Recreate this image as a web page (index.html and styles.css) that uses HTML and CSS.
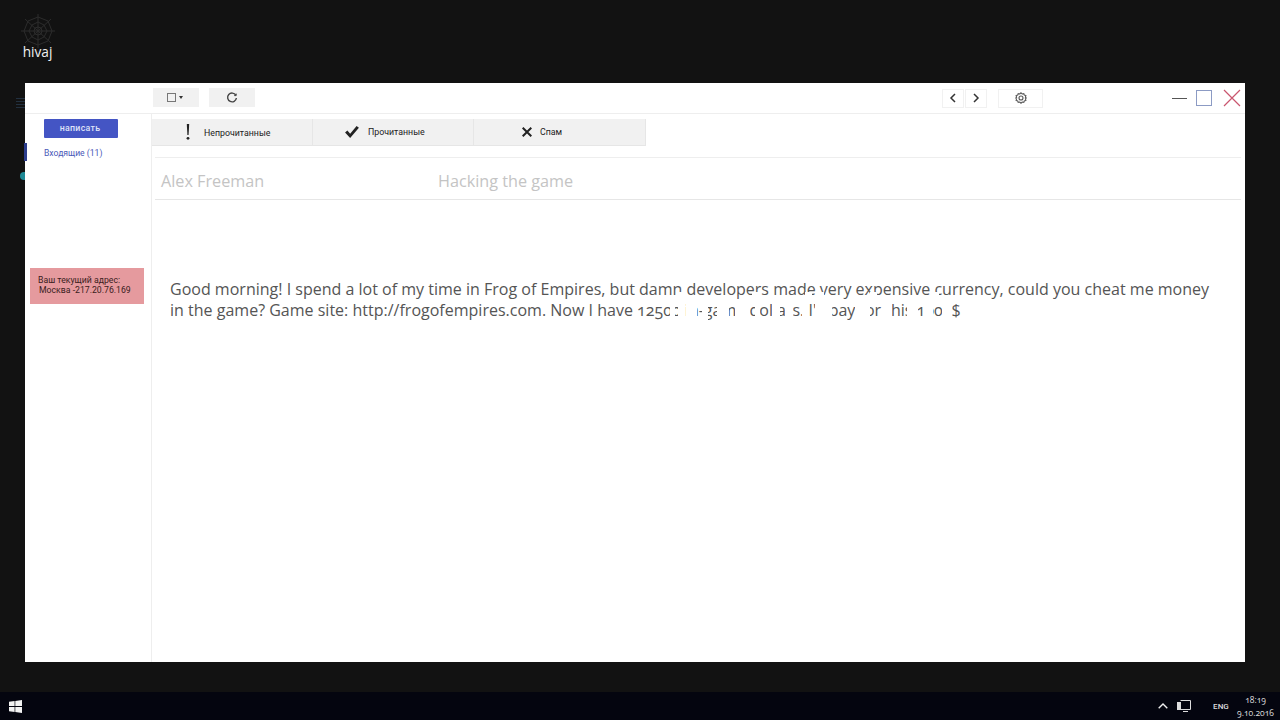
FILE: index.html
```html
<!DOCTYPE html>
<html lang="ru">
<head>
<meta charset="utf-8">
<title>hivaj</title>
<link rel="stylesheet" href="styles.css">
</head>
<body>
<div class="desktop">
  <div class="desk-icon">
    <svg class="web" width="36" height="34" viewBox="0 0 36 34" fill="none" stroke="#2c2c2c" stroke-width="1">
      <path d="M18 0V34M1 17H35M5 5L31 29M31 5L5 29"/>
      <path d="M18 3L28 7L32 17L28 27L18 31L8 27L4 17L8 7Z"/>
      <path d="M18 8L24 11L27 17L24 23L18 26L12 23L9 17L12 11Z"/>
      <path d="M18 13L21 14L22 17L21 20L18 21L15 20L14 17L15 14Z"/>
    </svg>
    <span class="desk-label">hivaj</span>
  </div>
  <div class="peek peek-lines"></div>
  <div class="peek peek-teal"></div>

  <main class="window">
    <header class="toolbar">
      <div class="tool-left">
        <button class="tool tool-select"><span class="check"></span><span class="caret"></span></button>
        <button class="tool tool-refresh">
          <svg width="12" height="12" viewBox="0 0 12 12" fill="none" stroke="#444" stroke-width="1.4"><path d="M9.8 3.2A4.4 4.4 0 1 0 10.4 6"/><path d="M10.2 1.6V3.6H8.2" stroke-width="1"/></svg>
        </button>
      </div>
      <div class="tool-right">
        <div class="pager">
          <button class="page-btn"><svg width="8" height="10" viewBox="0 0 8 10" fill="none" stroke="#333" stroke-width="1.5"><path d="M6 1L2 5L6 9"/></svg></button>
          <button class="page-btn"><svg width="8" height="10" viewBox="0 0 8 10" fill="none" stroke="#333" stroke-width="1.5"><path d="M2 1L6 5L2 9"/></svg></button>
        </div>
        <button class="settings">
          <svg width="12" height="12" viewBox="0 0 12 12" fill="none" stroke="#555" stroke-width="1.1"><circle cx="6" cy="6" r="2"/><path d="M6 .8L7.2 2 8.8 1.6 9.3 3.1 10.9 3.6 10.4 5.2 11.3 6 10.4 6.8 10.9 8.4 9.3 8.9 8.8 10.4 7.2 10 6 11.2 4.8 10 3.2 10.4 2.7 8.9 1.1 8.4 1.6 6.8.7 6 1.6 5.2 1.1 3.6 2.7 3.1 3.2 1.6 4.8 2Z"/></svg>
        </button>
        <div class="winctl">
          <span class="minimize"></span>
          <span class="maximize"></span>
          <svg width="18" height="18" viewBox="0 0 18 18" stroke="#c9566f" stroke-width="1.2"><path d="M1 1L17 17M17 1L1 17"/></svg>
        </div>
      </div>
    </header>
    <div class="body">
      <aside class="sidebar">
        <button class="compose">написать</button>
        <a class="inbox">Входящие (11)</a>
        <div class="address">
          <div>Ваш текущий адрес:</div>
          <div class="address-line">Москва -217.20.76.169</div>
        </div>
      </aside>
      <section class="content">
        <nav class="tabs">
          <div class="tab tab-unread">
            <svg width="4" height="16" viewBox="0 0 4 16" fill="#222"><path d="M.8 0H3.2L2.6 11H1.4Z"/><circle cx="2" cy="14.3" r="1.4"/></svg>
            <span class="tab-text-low">Непрочитанные</span>
          </div>
          <div class="tab tab-read">
            <svg width="14" height="12" viewBox="0 0 15 13" fill="#222"><path d="M0 7L2.5 5L5.5 8.5L12.5 0L15 2L5.5 13Z"/></svg>
            <span>Прочитанные</span>
          </div>
          <div class="tab tab-spam">
            <svg width="10" height="10" viewBox="0 0 10 10" stroke="#222" stroke-width="2"><path d="M.7 .7L9.3 9.3M9.3 .7L.7 9.3"/></svg>
            <span>Спам</span>
          </div>
        </nav>
        <div class="mail-row">
          <span class="sender">Alex Freeman</span>
          <span class="subject">Hacking the game</span>
        </div>
        <div class="message">
          <p>Good morning! I spend a lot of my time in Frog of Empires, but damn developers made very expensive currency, could you cheat me money in the game? Game site: http://frogofempires.com. Now I have 12500 in-game dollars. I'll pay for this 1000$</p>
          <i class="glitch glitch-upper"></i>
          <i class="glitch glitch-lower"></i>
        </div>
      </section>
    </div>
    <div class="peek peek-blue"></div>
  </main>

  <footer class="taskbar">
    <svg class="start" width="13" height="13" viewBox="0 0 13 13" fill="#f2f2f2"><path d="M0 1.8L5.6 1V6.1H0ZM6.3 .9L13 0V6.1H6.3ZM0 6.9H5.6V12L0 11.2ZM6.3 6.9H13V13L6.3 12.1Z"/></svg>
    <div class="tray">
      <svg width="10" height="6" viewBox="0 0 10 6" fill="none" stroke="#eee" stroke-width="1.4"><path d="M.7 5.3L5 1L9.3 5.3"/></svg>
      <svg class="tray-net" width="14" height="12" viewBox="0 0 14 12" fill="none" stroke="#ddd" stroke-width="1"><path d="M3.5 .5H13.5V9.5H3.5M6 11.5H11"/><rect x=".5" y="2.5" width="3" height="7" fill="#ddd"/></svg>
      <span class="lang">ENG</span>
      <div class="clock"><span>18:19</span><span>9.10.2016</span></div>
    </div>
  </footer>
</div>
</body>
</html>
```
FILE: styles.css
```css
* { box-sizing: border-box; }
html, body { margin: 0; height: 100%; overflow: hidden; }
body { background: #111; font-family: "Roboto", "Liberation Sans", sans-serif; }
button { font: inherit; border: 0; padding: 0; }

.desktop { position: relative; width: 1280px; height: 720px; background: #121212; }

.desk-icon { position: absolute; left: 15px; top: 14px; width: 46px; display: flex; flex-direction: column; align-items: center; }
.desk-label { color: #f0f0f0; font: 13.7px/16px "Open Sans", sans-serif; margin-top: -4px; margin-right: 1px; }
.peek { position: absolute; }
.peek-lines { left: 16px; top: 98px; width: 9px; height: 12px; background: repeating-linear-gradient(#22303f 0 1px, #121212 1px 3px); }
.peek-blue { left: -1px; top: 60px; width: 3px; height: 18px; background: #2c3d8c; }
.peek-teal { left: 20px; top: 172px; width: 5px; height: 8px; border-radius: 4px 0 0 4px; background: #1f8a96; }

.window { position: absolute; left: 25px; top: 83px; width: 1220px; height: 579px; background: #fff; display: flex; flex-direction: column; }
.toolbar { height: 31px; border-bottom: 1px solid #eee; display: flex; justify-content: space-between; align-items: center; padding-left: 128px; }
.tool-left { display: flex; gap: 10px; margin-top: -1px; }
.tool { width: 46px; height: 19px; background: #f1f1f1; display: flex; align-items: center; justify-content: center; gap: 3px; }
.tool-select { padding-right: 2px; }
.check { width: 9px; height: 9px; border: 1px solid #777; }
.caret { border: 2.5px solid transparent; border-top: 3px solid #333; border-bottom: 0; }
.tool-right { display: flex; align-items: center; }
.pager { display: flex; gap: 1px; }
.page-btn { width: 22px; height: 19px; background: #fff; border: 1px solid #f1f1f1; display: flex; align-items: center; justify-content: center; }
.settings { width: 45px; height: 19px; margin-left: 11px; background: #fff; border: 1px solid #f1f1f1; display: flex; align-items: center; justify-content: center; }
.winctl { display: flex; align-items: center; margin-left: 129px; padding-right: 4px; }
.minimize { width: 15px; height: 1px; background: #555; }
.maximize { width: 16px; height: 16px; border: 1px solid #8c9bc4; margin: 0 11px 0 9px; }

.body { flex: 1; display: flex; min-height: 0; }
.sidebar { width: 127px; border-right: 1px solid #eee; padding: 5px 0 0 19px; display: flex; flex-direction: column; align-items: flex-start; }
.compose { width: 74px; height: 19px; background: #4455c4; color: #dfe3f8; font-size: 8.8px; font-weight: 500; letter-spacing: .3px; text-align: center; border-radius: 1px; padding: 0 2px 2px 0; }
.inbox { color: #4a58b8; font-size: 8.6px; line-height: 12px; margin-top: 9px; }
.address { width: 114px; height: 36px; margin: 109px 0 0 -14px; background: #e59a9e; color: #3a1c20; font-size: 8.7px; line-height: 10px; padding: 7px 0 0 8px; }
.address-line { padding-left: 1px; }

.content { flex: 1; min-width: 0; padding-top: 5px; }
.tabs { width: 494px; height: 27px; display: flex; background: #f1f1f1; border-bottom: 1px solid #e6e6e6; color: #222; font-size: 8.8px; }
.tab { display: flex; align-items: center; border-right: 1px solid #e6e6e6; }
.tab-unread { width: 161px; padding-left: 34px; gap: 14px; }
.tab-read { width: 161px; padding-left: 32px; gap: 9px; }
.tab-spam { flex: 1; padding-left: 48px; gap: 8px; }
.tab-text-low { margin-top: 1px; }

.mail-row { margin: 11px 4px 0 3px; height: 43px; padding-top: 4px; border-top: 1px solid #eee; border-bottom: 1px solid #e6e6e6; display: flex; align-items: center; color: #c4c4c4; font: 16.2px/20px "Open Sans", sans-serif; }
.sender { width: 283px; padding-left: 6px; flex: none; }

.message { position: relative; margin: 79px 20px 0 18px; color: #555; font: 16.03px/21px "Open Sans", sans-serif; font-variant-numeric: oldstyle-nums; }
.message p { margin: 0; }
.glitch { position: absolute; }
.glitch-upper { left: 508px; top: 13px; width: 270px; height: 8px; background: linear-gradient(90deg, #fff 0 6px, transparent 6px 74px, #fff 74px 82px, transparent 82px 127px, #fff 127px 134px, transparent 134px 142px, #fff 142px 146px, transparent 146px 192px, #fff 192px 199px, transparent 199px 257px, #fff 257px 261px, transparent 261px); }
.glitch-lower { left: 500px; top: 21px; width: 282px; height: 21px; background: linear-gradient(90deg, #fff 0 5px, transparent 5px 8px, #fff 8px 14px, transparent 14px 16px, #fff 16px 27px, transparent 27px 32px, #fff 32px 38px, transparent 38px 47px, #fff 47px 59px, transparent 59px 65px, #fff 65px 80px, transparent 80px 85px, #fff 85px 90px, transparent 90px 102px, #fff 102px 110px, transparent 110px 115px, #fff 115px 123px, transparent 123px 132px, #fff 132px 138px, transparent 138px 145px, #fff 145px 155px, transparent 155px 157px, #fff 157px 162px, transparent 162px 185px, #fff 185px 200px, transparent 200px 212px, #fff 212px 222px, transparent 222px 237px, #fff 237px 248px, transparent 248px 253px, #fff 253px 263px, transparent 263px 272px, #fff 272px 282px); }

.taskbar { position: absolute; left: 0; right: 0; bottom: 0; height: 28px; background: #04050f; display: flex; justify-content: space-between; align-items: center; padding: 0 6px 0 9px; }
.tray { display: flex; align-items: center; color: #ddd; }
.tray-net { margin-left: 9px; }
.lang { font-size: 8px; font-weight: 500; margin-left: 22px; width: 24px; }
.clock { display: flex; flex-direction: column; align-items: center; font: 8.5px/13px "Open Sans", sans-serif; font-variant-numeric: oldstyle-nums; }
```
